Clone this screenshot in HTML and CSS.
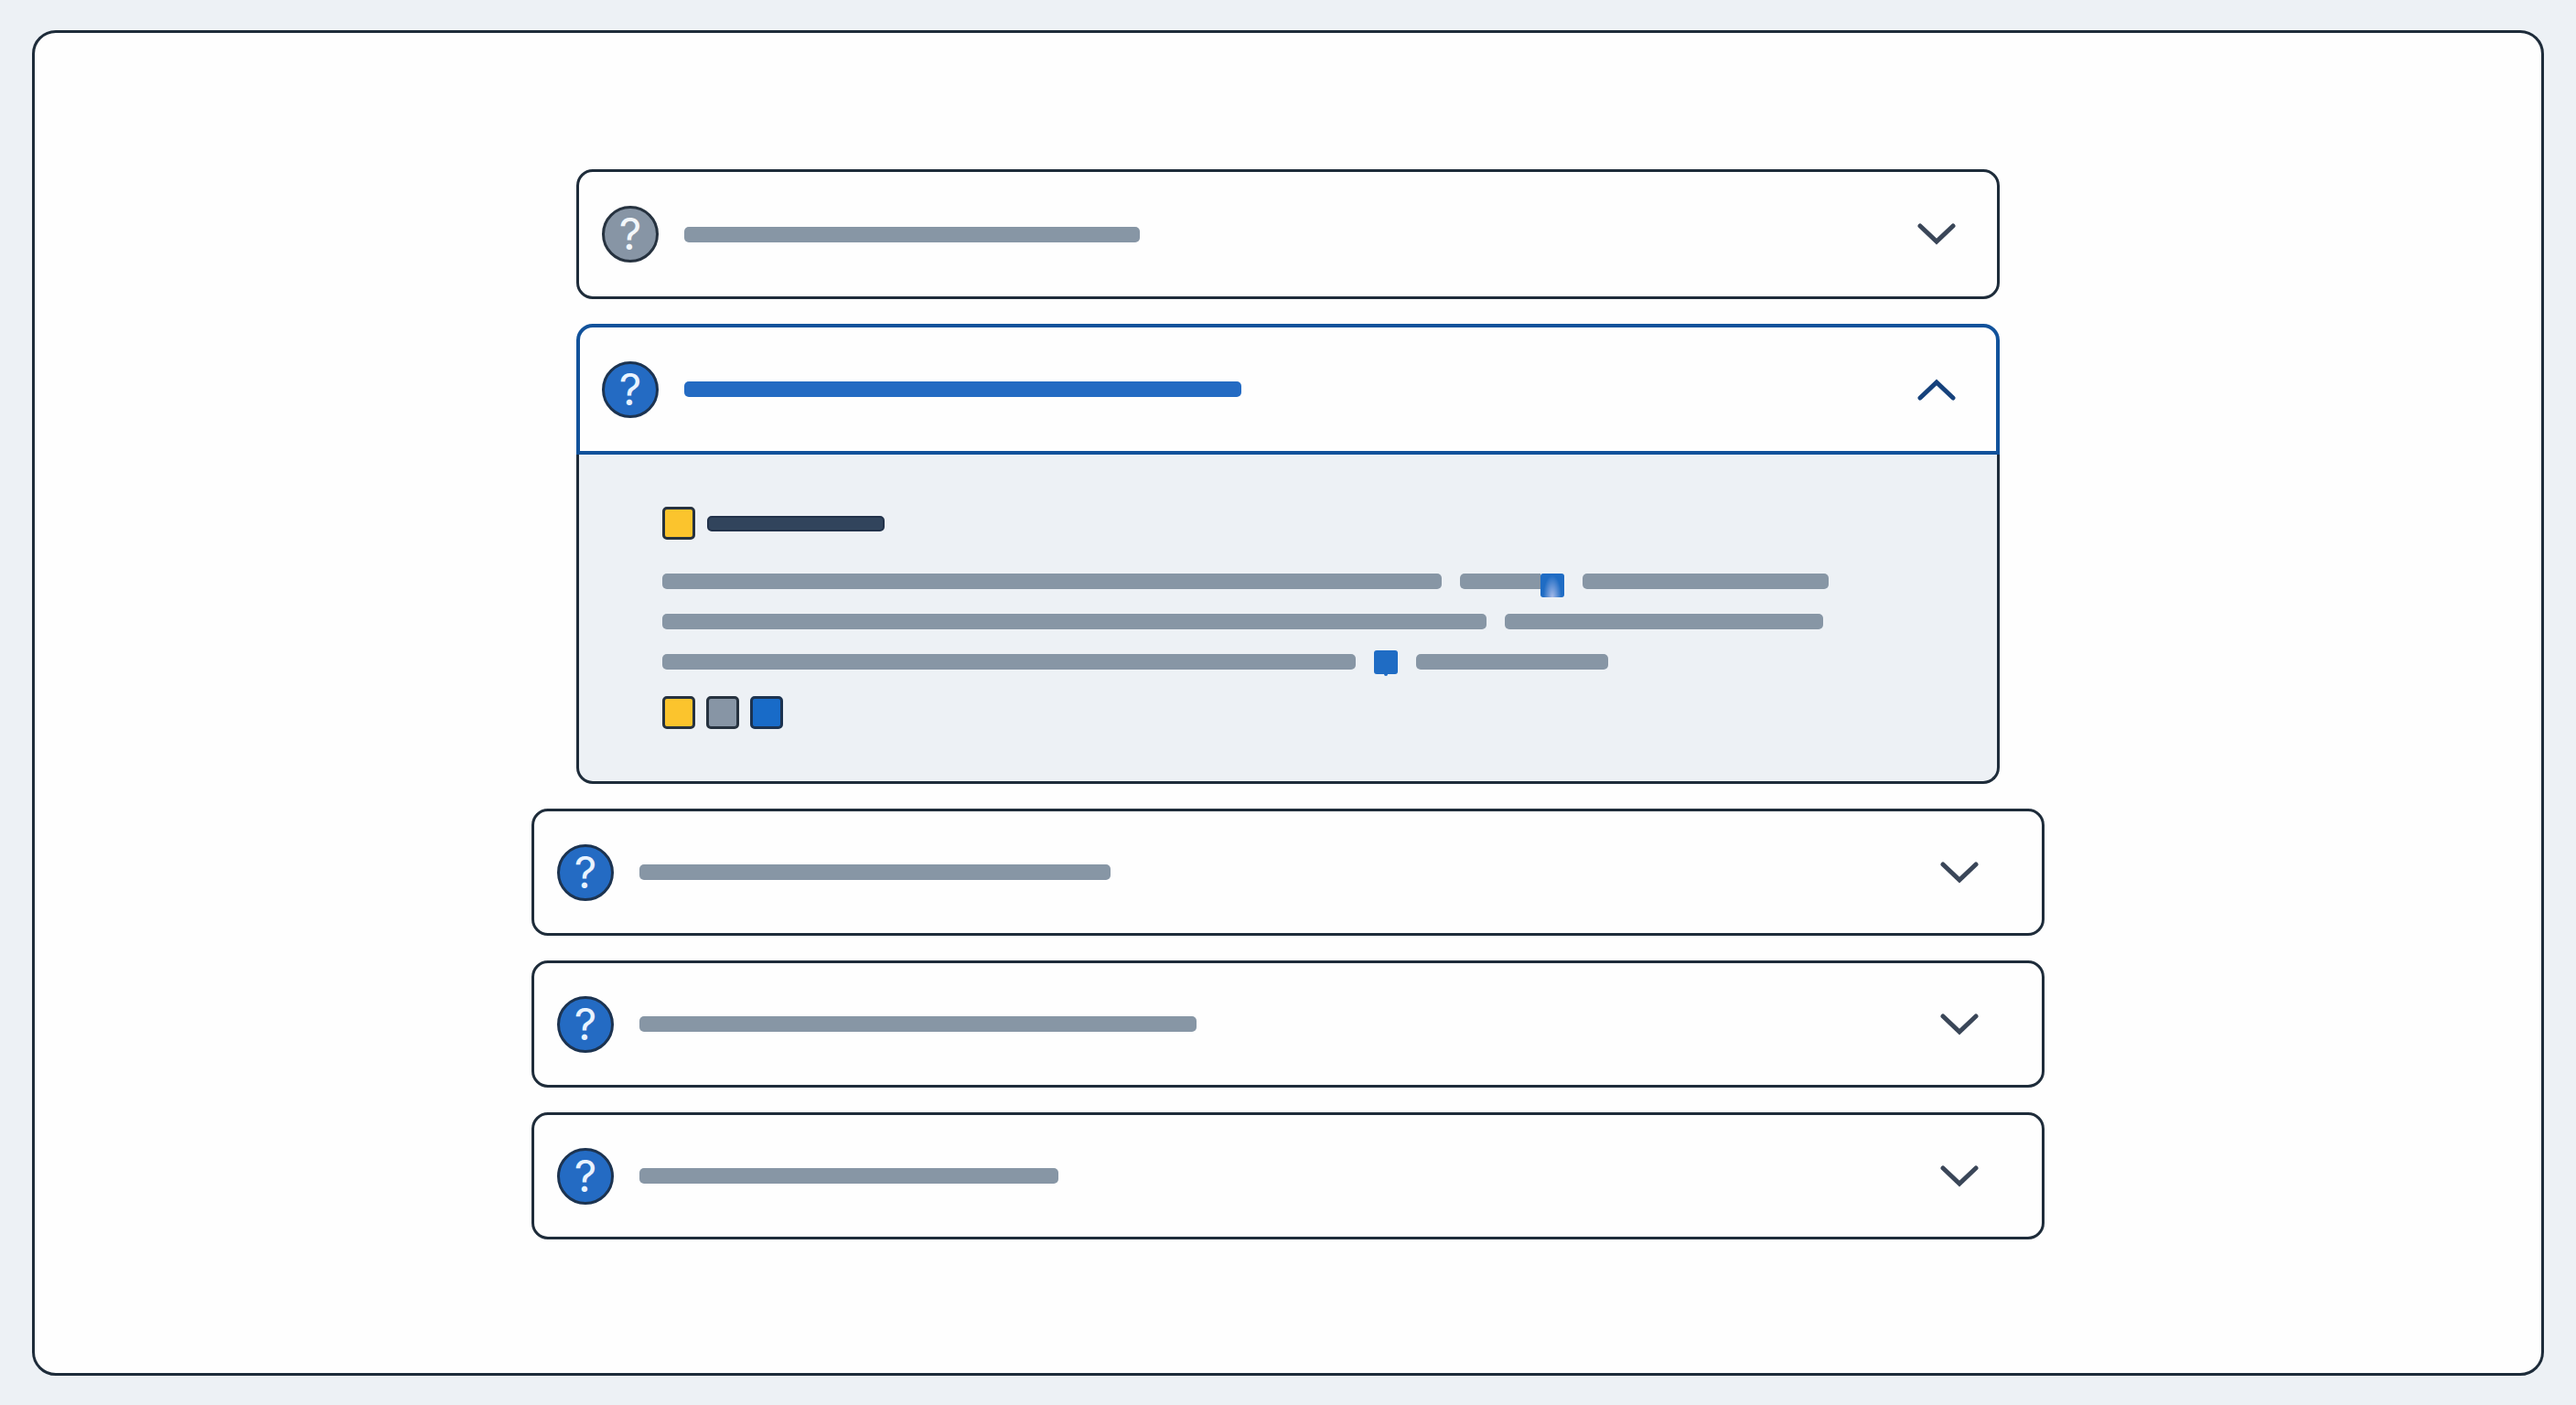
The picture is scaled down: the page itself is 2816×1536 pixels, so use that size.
FILE: index.html
```html
<!DOCTYPE html>
<html lang="en">
<head>
    <meta charset="UTF-8">
    <meta name="viewport" content="width=device-width, initial-scale=1.0">
    <title>FAQ accordion</title>
    <link rel="stylesheet" href="styles.css">
</head>
<body>

<main class="panel">
    <div class="item">
        <button class="item-header" type="button" aria-expanded="false" aria-label="Question 1">
            <span class="badge badge-muted">?</span>
            <span class="bar title-1"></span>
            <svg class="chevron" viewBox="0 0 42 24"><path d="M3 3L21 20L39 3"/></svg>
        </button>
    </div>

    <div class="item open">
        <button class="item-header" type="button" aria-expanded="true" aria-controls="answer" aria-label="Question 2">
            <span class="badge">?</span>
            <span class="bar bar-blue title-2"></span>
            <svg class="chevron" viewBox="0 0 42 24"><path d="M3 21L21 4L39 21"/></svg>
        </button>
        <div class="item-body" id="answer">
            <div class="answer-heading">
                <span class="swatch yellow"></span>
                <span class="bar bar-dark heading-bar"></span>
            </div>
            <div class="lines">
                <div class="line">
                    <span class="bar w-852"></span>
                    <span class="joined">
                        <span class="bar bar-cut w-88"></span>
                        <span class="chip chip-fade"></span>
                    </span>
                    <span class="bar w-269"></span>
                </div>
                <div class="line">
                    <span class="bar w-901"></span>
                    <span class="bar w-348"></span>
                </div>
                <div class="line">
                    <span class="bar w-758"></span>
                    <span class="chip chip-tail"></span>
                    <span class="bar w-210"></span>
                </div>
            </div>
            <div class="swatches">
                <span class="swatch yellow"></span>
                <span class="swatch grey"></span>
                <span class="swatch blue"></span>
            </div>
        </div>
    </div>

    <div class="item wide">
        <button class="item-header" type="button" aria-expanded="false" aria-label="Question 3">
            <span class="badge">?</span>
            <span class="bar title-3"></span>
            <svg class="chevron" viewBox="0 0 42 24"><path d="M3 3L21 20L39 3"/></svg>
        </button>
    </div>

    <div class="item wide">
        <button class="item-header" type="button" aria-expanded="false" aria-label="Question 4">
            <span class="badge">?</span>
            <span class="bar title-2"></span>
            <svg class="chevron" viewBox="0 0 42 24"><path d="M3 3L21 20L39 3"/></svg>
        </button>
    </div>

    <div class="item wide">
        <button class="item-header" type="button" aria-expanded="false" aria-label="Question 5">
            <span class="badge">?</span>
            <span class="bar title-5"></span>
            <svg class="chevron" viewBox="0 0 42 24"><path d="M3 3L21 20L39 3"/></svg>
        </button>
    </div>
</main>

</body>
</html>
```
FILE: styles.css
```css
* {
    box-sizing: border-box;
}

body {
    margin: 0;
    padding: 33px 35px 32px;
    min-height: 100vh;
    display: flex;
    background-color: #edf1f5;
    font-family: Inter, Arial, sans-serif;
}

.panel {
    flex: 1;
    min-width: 0;
    display: flex;
    flex-direction: column;
    align-items: center;
    gap: 27px;
    padding: 149px 32px 100px;
    background-color: #fefefe;
    border: 3px solid #1e2c3a;
    border-radius: 26px;
}

.item {
    width: 100%;
    max-width: 1556px;
}

.item.wide {
    max-width: 1654px;
}

/* Header row */
.item-header {
    display: flex;
    align-items: center;
    gap: 28px;
    width: 100%;
    min-height: 142px;
    padding: 0 45px 0 25px;
    background-color: #fefefe;
    border: 3px solid #1e2c3a;
    border-radius: 18px;
    font-family: inherit;
    cursor: pointer;
}

.wide .item-header {
    min-height: 139px;
    padding-right: 69px;
}

.open .item-header {
    min-height: 143px;
    padding: 0 44px 0 24px;
    border: 4px solid #11529b;
    border-radius: 18px 18px 0 0;
}

.badge {
    display: flex;
    flex: none;
    justify-content: center;
    align-items: center;
    width: 62px;
    height: 62px;
    background-color: #246bc3;
    border: 3px solid #1c3350;
    border-radius: 50%;
    color: #e9f3ff;
    font-size: 48px;
    line-height: 56px;
}

.badge-muted {
    background-color: #8795a5;
    border-color: #26323f;
    color: #f3f7fb;
}

.chevron {
    flex: none;
    width: 42px;
    height: 24px;
    margin-left: auto;
    fill: none;
    stroke: #3a4658;
    stroke-width: 5;
    stroke-linecap: round;
}

.open .chevron {
    stroke: #16427c;
}

/* Placeholder text bars */
.bar {
    height: 17px;
    min-width: 0;
    background-color: #8796a5;
    border-radius: 5px;
}

.bar-blue {
    background-color: #246bc3;
}

.bar-dark {
    background-color: #31445c;
    border: 2px solid #22324a;
}

.bar-cut {
    border-radius: 5px 0 0 5px;
}

.title-1 { width: 498px; }
.title-2 { width: 609px; }
.title-3 { width: 515px; }
.title-5 { width: 458px; }
.heading-bar { width: 194px; }

.w-852 { width: 852px; }
.w-88 { width: 88px; }
.w-269 { width: 269px; }
.w-901 { width: 901px; }
.w-348 { width: 348px; }
.w-758 { width: 758px; }
.w-210 { width: 210px; }

/* Answer */
.item-body {
    padding: 57px 91px 57px;
    background-color: #edf1f5;
    border: 3px solid #1e2c3a;
    border-top: none;
    border-radius: 0 0 18px 18px;
}

.answer-heading {
    display: flex;
    align-items: center;
    gap: 13px;
    margin-bottom: 37px;
}

.lines {
    display: flex;
    flex-direction: column;
    gap: 27px;
    margin-bottom: 29px;
}

.line {
    display: flex;
    align-items: center;
    gap: 20px;
    height: 17px;
}

.joined {
    display: flex;
    height: 17px;
}

.chip {
    position: relative;
    flex: none;
    width: 26px;
    height: 26px;
    background-color: #1f6cc4;
    border-radius: 3px;
}

.chip-fade {
    background: radial-gradient(ellipse 10px 24px at 50% 100%, #a5b9e8, #1f6cc4);
}

.chip-tail::after {
    content: '';
    position: absolute;
    left: 11px;
    bottom: -2px;
    width: 4px;
    height: 4px;
    border-radius: 50%;
    background-color: #1f6cc4;
}

.swatches {
    display: flex;
    gap: 12px;
}

.swatch {
    flex: none;
    width: 36px;
    height: 36px;
    border: 3px solid #26323f;
    border-radius: 5px;
}

.yellow {
    background-color: #fbc42d;
}

.grey {
    background-color: #8795a5;
}

.blue {
    background-color: #186bc8;
    border-color: #1c3350;
}
```
